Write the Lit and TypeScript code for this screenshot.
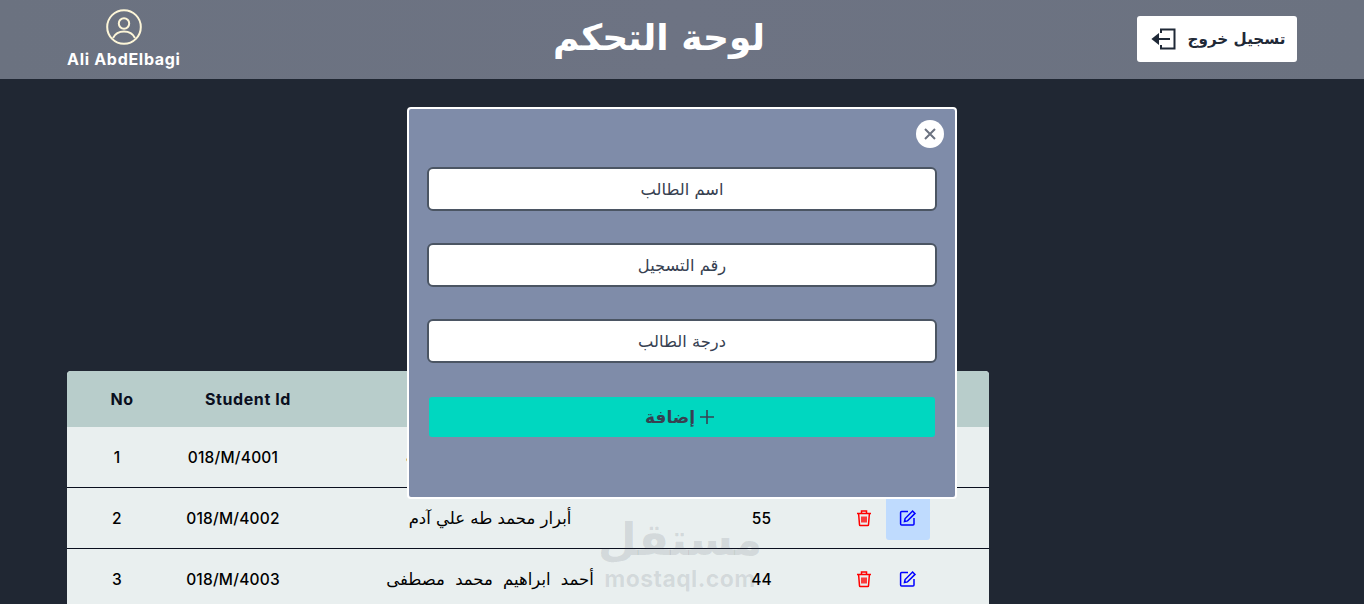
import { LitElement, html, css, svg } from "lit";
import { customElement } from "lit/decorators.js";

const rows = [
  { no: "1", id: "018/M/4001", name: "آية محمد عبد الله الطيب", grade: "70", wide: false },
  { no: "2", id: "018/M/4002", name: "أبرار محمد طه علي آدم", grade: "55", wide: false },
  { no: "3", id: "018/M/4003", name: "أحمد ابراهيم محمد مصطفى", grade: "44", wide: true },
];

const trash = svg`<svg class="ico" width="18" height="18" viewBox="0 0 18 18" fill="none" stroke="#ff0000" stroke-width="1.5"><path d="M2 4.500h14M6.500 4.500V2h5v2.500M3.600 4.500l.9 11.200c0 .4.4.8.8.8h7.400c.4 0 .8-.4.8-.8l.9-11.200M7 7.500v6M9 7.500v6M11 7.500v6"/></svg>`;
const edit = svg`<svg class="ico" width="18" height="18" viewBox="0 0 18 18" fill="none" stroke="#0000ff" stroke-width="1.500"><path d="M9 2.500H2.600c-.6 0-1 .4-1 1v11.400c0 .6.4 1 1 1H14c.6 0 1-.4 1-1V9"/><path d="M5.500 12.500l.6-3L13.600 2l2.400 2.400-7.500 7.500z"/></svg>`;

@customElement("app-root")
export class AppRoot extends LitElement {
  static styles = css`
    :host { display: block; height: 604px; overflow: hidden; position: relative; background: #202733; font-family: "Inter", "DejaVu Sans", sans-serif; }
    .top { height: 79px; background: linear-gradient(90deg, #6b7280, #6d7383 50%, #6b7280); display: grid; grid-template-columns: 1fr auto 1fr; align-items: start; padding: 0 67px; }
    .user { justify-self: start; display: flex; flex-direction: column; align-items: center; gap: 5px; padding-top: 9px; color: #fff; font: 700 16px/18px "Inter", sans-serif; letter-spacing: .7px; }
    .title { font: 700 36px/76px "DejaVu Sans", sans-serif; color: #fff; margin: 0; position: relative; left: -23px; }
    .logout { justify-self: end; margin-top: 16px; height: 46px; width: 160px; box-sizing: border-box; padding-left: 2px; background: #fff; border-radius: 3px; display: flex; align-items: center; justify-content: center; gap: 11px; color: #1f2937; font: 700 15.2px "DejaVu Sans", sans-serif; }
    .main { padding: 292px 375px 0 67px; }
    .table { border-radius: 4px 4px 0 0; overflow: hidden; background: #e9efef; color: #000; }
    .head { height: 56px; background: #b8cdcb; display: grid; grid-template-columns: 110px 142px 1fr; align-items: center; text-align: center; font: 700 16px "Inter", sans-serif; letter-spacing: .6px; color: #0a0f1e; }
    .row { height: 60px; border-bottom: 1px solid #0a0f1e; display: grid; grid-template-columns: 100px 132px 382px 161px 44px 44px; align-items: center; text-align: center; font: 500 15.5px "Inter", sans-serif; letter-spacing: .2px; }
    .row:last-child { border-bottom: 0; }
    .name { font: 400 16.5px "DejaVu Sans", sans-serif; letter-spacing: 0; }
    .name.wide { word-spacing: 5px; }
    .act { height: 44px; display: flex; align-items: center; justify-content: center; border-radius: 3px; }
    .act.on { background: #bfdbfe; }
    .ico { display: block; }
    .modal { position: absolute; left: 407px; top: 107px; width: 550px; height: 392px; box-sizing: border-box; background: #7f8ca9; border: 2px solid #fff; border-radius: 4px; padding: 58px 18px 0; display: flex; flex-direction: column; }
    .close { position: absolute; right: 11px; top: 11px; width: 28px; height: 28px; border-radius: 50%; background: #fff; display: flex; align-items: center; justify-content: center; }
    .field { height: 44px; box-sizing: border-box; border: 2px solid #4b5563; border-radius: 6px; background: #fff; margin-bottom: 32px; display: flex; align-items: center; justify-content: center; color: #374151; font: 400 16.3px "DejaVu Sans", sans-serif; }
    .add { height: 40px; margin: 2px 2px 0; border-radius: 3px; background: #00d7c0; display: flex; align-items: center; justify-content: center; gap: 3px; padding-right: 3px; color: #374151; font: 700 17px "DejaVu Sans", sans-serif; }
    .mark { position: absolute; left: 600px; top: 512px; width: 160px; display: flex; flex-direction: column; align-items: center; color: rgba(60,70,80,.13); pointer-events: none; }
    .mark b { font: 700 45px/56px "DejaVu Sans", sans-serif; }
    .mark span { font: 700 23px/22px "Inter", sans-serif; letter-spacing: .4px; }
  `;
  render() {
    return html`
      <div class="top">
        <div class="user">
          <svg width="36" height="36" viewBox="0 0 36 36" fill="none" stroke="#fdf6d8" stroke-width="2"><circle cx="18" cy="18" r="16.800"/><circle cx="18" cy="14.500" r="5.200"/><path d="M7 29c2-4 6.200-6.500 11-6.500S27 25 29 29"/></svg>
          <span>Ali AbdElbagi</span>
        </div>
        <h1 class="title">لوحة التحكم</h1>
        <div class="logout" dir="rtl">
          <span>تسجيل خروج</span>
          <svg width="26" height="26" viewBox="0 0 26 26" fill="none" stroke="#1f2937" stroke-width="2"><path d="M10 7V3.500h13.500v19H10V19"/><path d="M19 13H5"/><path d="M7 9l-5 4 5 4z" fill="#1f2937"/></svg>
        </div>
      </div>
      <div class="main">
        <div class="table">
          <div class="head"><span>No</span><span>Student Id</span><span></span></div>
          ${rows.map((r, i) => html`
            <div class="row">
              <span>${r.no}</span><span>${r.id}</span><span class="name ${r.wide ? "wide" : ""}" dir="rtl">${r.name}</span><span>${r.grade}</span>
              <div class="act">${trash}</div>
              <div class="act ${i === 1 ? "on" : ""}">${edit}</div>
            </div>`)}
        </div>
      </div>
      <div class="mark"><b>مستقل</b><span>mostaql.com</span></div>
      <div class="modal">
        <div class="close"><svg width="14" height="14" viewBox="0 0 14 14" stroke="#6b7280" stroke-width="2"><path d="M2 2l10 10M12 2L2 12"/></svg></div>
        <div class="field" dir="rtl">اسم الطالب</div>
        <div class="field" dir="rtl">رقم التسجيل</div>
        <div class="field" dir="rtl">درجة الطالب</div>
        <div class="add" dir="rtl"><svg width="18" height="18" viewBox="0 0 18 18" stroke="#374151" stroke-width="1.6"><path d="M9 2v14M2 9h14"/></svg><span>إضافة</span></div>
      </div>
    `;
  }
}
